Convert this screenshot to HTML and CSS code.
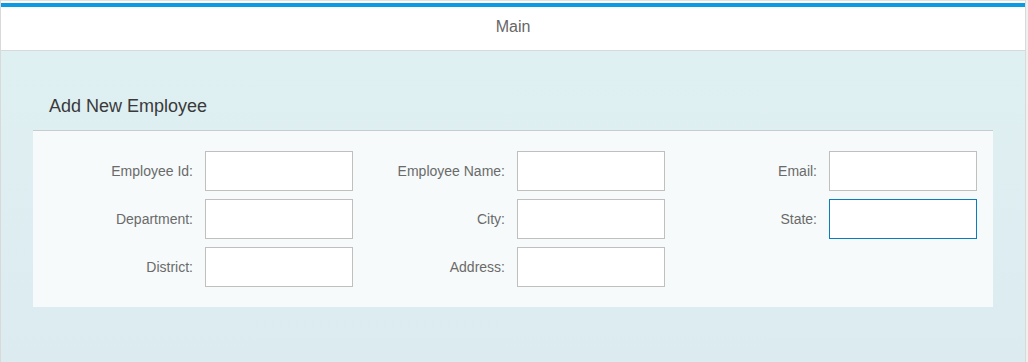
FILE: index.html
```html
<!DOCTYPE html>
<html lang="en">
<head>
<meta charset="utf-8">
<title>Main</title>
<link rel="stylesheet" href="styles.css">
</head>
<body>
<div class="shell">
  <header class="app-header">
    <div class="accent"></div>
    <div class="title-bar">Main</div>
  </header>
  <main class="content">
    <div class="form-toolbar">Add New Employee</div>
    <section class="panel">
      <div class="form-grid">
        <div class="field"><label class="label" for="empId">Employee Id:</label><input class="input" id="empId" type="text"></div>
        <div class="field"><label class="label" for="empName">Employee Name:</label><input class="input" id="empName" type="text"></div>
        <div class="field"><label class="label" for="email">Email:</label><input class="input" id="email" type="text"></div>
        <div class="field"><label class="label" for="dept">Department:</label><input class="input" id="dept" type="text"></div>
        <div class="field"><label class="label" for="city">City:</label><input class="input" id="city" type="text"></div>
        <div class="field"><label class="label" for="state">State:</label><input class="input input-focus" id="state" type="text"></div>
        <div class="field"><label class="label" for="district">District:</label><input class="input" id="district" type="text"></div>
        <div class="field"><label class="label" for="address">Address:</label><input class="input" id="address" type="text"></div>
      </div>
    </section>
  </main>
</div>
</body>
</html>
```

FILE: styles.css
```css
html, body {
  margin: 0;
  padding: 0;
  height: 100%;
}

body {
  background: #efefef;
  font-family: "Liberation Sans", Arial, sans-serif;
  overflow: hidden;
}

.shell {
  width: 1024px;
  height: 100%;
  border-left: 1px solid #d9d9d9;
  border-right: 1px solid #d9d9d9;
  display: flex;
  flex-direction: column;
}

.app-header {
  background: #ffffff;
  border-top: 1px solid #e2e2e2;
  border-bottom: 1px solid #d9d9d9;
  padding-top: 2px;
  flex: none;
}

.accent {
  height: 4px;
  background: #0a9be3;
}

.title-bar {
  height: 43px;
  line-height: 40px;
  text-align: center;
  font-size: 16px;
  color: #666666;
}

.content {
  flex: 1;
  background: linear-gradient(180deg, #dff0f3 0%, #dcebef 100%);
  padding: 31px 32px 0;
}

.form-toolbar {
  height: 48px;
  line-height: 48px;
  padding-left: 16px;
  font-size: 18px;
  color: #3a3a3a;
}

.panel {
  background: #f6fafb;
  border-top: 1px solid #c6cccf;
  padding: 20px 16px;
}

.form-grid {
  display: grid;
  grid-template-columns: repeat(3, 304px);
  column-gap: 8px;
  row-gap: 8px;
}

.field {
  display: flex;
  align-items: center;
}

.label {
  width: 156px;
  padding-right: 12px;
  box-sizing: border-box;
  text-align: right;
  font-size: 14px;
  color: #6a6a6a;
}

.input {
  width: 148px;
  height: 40px;
  box-sizing: border-box;
  margin: 0;
  border: 1px solid #bfbfbf;
  border-radius: 0;
  background: #ffffff;
  outline: none;
  font-family: inherit;
  font-size: 14px;
}

.input-focus {
  border-color: #0a7cc1;
}
```
